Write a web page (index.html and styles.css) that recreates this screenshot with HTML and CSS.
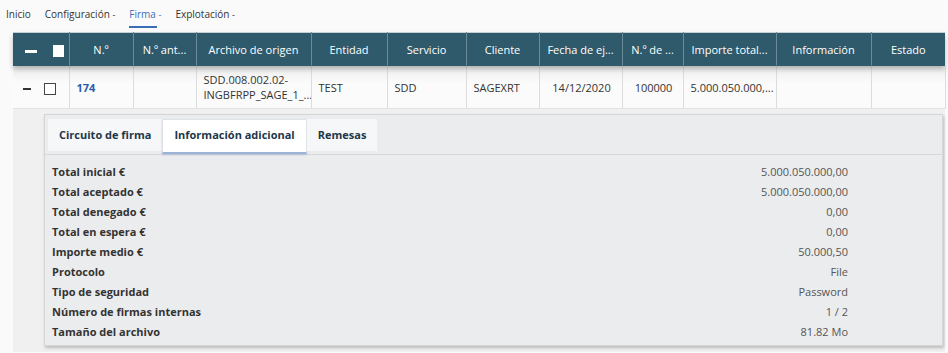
FILE: index.html
```html
<!DOCTYPE html>
<html lang="es">
<head>
  <meta charset="UTF-8">
  <title>Firma</title>
  <link rel="stylesheet" href="styles.css">
</head>
<body>
  <nav class="top-nav">
    <a class="nav-item">Inicio</a>
    <a class="nav-item">Configuración <span class="caret">-</span></a>
    <a class="nav-item active">Firma <span class="caret">-</span></a>
    <a class="nav-item">Explotación <span class="caret">-</span></a>
  </nav>

  <div class="grid-wrap">
    <table class="grid">
      <colgroup>
        <col style="width:56px"><col style="width:64px"><col style="width:63px"><col style="width:115px">
        <col style="width:76px"><col style="width:79px"><col style="width:73px"><col style="width:83px">
        <col style="width:61px"><col style="width:93px"><col style="width:95px"><col style="width:74px">
      </colgroup>
      <thead>
        <tr>
          <th class="ctrl-cell"><span class="dash light"></span><span class="box light"></span></th>
          <th>N.º</th>
          <th>N.º ant...</th>
          <th>Archivo de origen</th>
          <th>Entidad</th>
          <th>Servicio</th>
          <th>Cliente</th>
          <th>Fecha de ej...</th>
          <th>N.º de ...</th>
          <th>Importe total...</th>
          <th>Información</th>
          <th>Estado</th>
        </tr>
      </thead>
      <tbody>
        <tr class="data-row">
          <td class="ctrl-cell"><span class="dash"></span><span class="box"></span></td>
          <td class="num-link">174</td>
          <td></td>
          <td>SDD.008.002.02-<br>INGBFRPP_SAGE_1_...</td>
          <td>TEST</td>
          <td>SDD</td>
          <td>SAGEXRT</td>
          <td class="center">14/12/2020</td>
          <td class="center">100000</td>
          <td>5.000.050.000,...</td>
          <td></td>
          <td></td>
        </tr>
        <tr class="detail-row">
          <td colspan="12">
            <div class="detail-card">
              <div class="tabs">
                <div class="tab">Circuito de firma</div>
                <div class="tab selected">Información adicional</div>
                <div class="tab">Remesas</div>
              </div>
              <dl class="info-list">
                <dt>Total inicial €</dt><dd>5.000.050.000,00</dd>
                <dt>Total aceptado €</dt><dd>5.000.050.000,00</dd>
                <dt>Total denegado €</dt><dd>0,00</dd>
                <dt>Total en espera €</dt><dd>0,00</dd>
                <dt>Importe medio €</dt><dd>50.000,50</dd>
                <dt>Protocolo</dt><dd>File</dd>
                <dt>Tipo de seguridad</dt><dd>Password</dd>
                <dt>Número de firmas internas</dt><dd>1 / 2</dd>
                <dt>Tamaño del archivo</dt><dd>81.82 Mo</dd>
              </dl>
            </div>
          </td>
        </tr>
      </tbody>
    </table>
  </div>
</body>
</html>
```

FILE: styles.css
```css
body {
  margin: 0;
  background-color: #fafafa;
  font-family: "Open Sans", "Noto Sans", sans-serif;
  color: #333;
}
.top-nav {
  display: flex;
  gap: 14px;
  height: 32px;
  padding-left: 6px;
  font-size: 10px;
  line-height: 28px;
}
.nav-item {
  color: #333;
  cursor: pointer;
}
.nav-item .caret {
  font-size: 9px;
}
.nav-item.active {
  color: #3a6fb5;
  position: relative;
}
.nav-item.active::after {
  content: "";
  position: absolute;
  left: 0;
  right: 4px;
  bottom: 4px;
  height: 2px;
  background-color: #3a6fb5;
}
.grid-wrap {
  margin-left: 13px;
  width: 932px;
}
.grid {
  width: 932px;
  table-layout: fixed;
  border-collapse: collapse;
  font-size: 11px;
}
.grid thead tr {
  background-color: #2f5a6b;
  box-shadow: 0 3px 5px rgba(0, 0, 0, 0.25);
  position: relative;
}
.grid th {
  height: 33px;
  padding: 0 5px;
  color: #fff;
  font-weight: normal;
  text-align: center;
  white-space: nowrap;
  overflow: hidden;
  border-right: 1px solid #6a8c99;
  border-top: 1px solid #c9d3d7;
}
.grid th:last-child {
  border-right: none;
}
.data-row td {
  height: 42px;
  padding: 0 5px 0 7px;
  border-right: 1px solid #dcdcdc;
  border-bottom: 1px solid #e2e2e2;
  background: linear-gradient(#ececec, #fbfbfb 40%, #fbfbfb);
  line-height: 15px;
  white-space: nowrap;
  overflow: hidden;
}
.data-row td.center {
  text-align: center;
}
.data-row td.num-link {
  color: #2a5db0;
  font-weight: bold;
}
.ctrl-cell {
  padding: 0 !important;
}
.ctrl-cell .dash {
  display: inline-block;
  width: 8px;
  height: 2px;
  background-color: #333;
  margin-left: 10px;
  vertical-align: middle;
}
.ctrl-cell .box {
  display: inline-block;
  width: 10px;
  height: 10px;
  border: 1px solid #444;
  background-color: #fff;
  margin-left: 13px;
  vertical-align: middle;
}
.ctrl-cell .dash.light {
  width: 12px;
  height: 3px;
  background-color: #fff;
  margin-left: 7px;
}
.ctrl-cell .box.light {
  width: 11px;
  height: 12px;
  border: none;
  margin-left: 16px;
}
.detail-row td {
  background-color: #f0f0f1;
  padding: 5px 2px 6px 31px;
}
.detail-card {
  background-color: #ebecee;
  border: 1px solid #d6d6d6;
  box-shadow: 1px 2px 3px rgba(0, 0, 0, 0.22);
}
.tabs {
  display: flex;
  padding: 4px 0 0 3px;
  border-bottom: 1px solid #d7d8da;
}
.tab {
  height: 32px;
  line-height: 32px;
  padding: 0 11px;
  background-color: #f6f7f8;
  color: #22364a;
  font-weight: 700;
  font-size: 11px;
}
.tab.selected {
  background-color: #fff;
  border: 1px solid #dfe3e8;
  border-bottom: 2px solid #9bb3d6;
  line-height: 29px;
  box-shadow: 0 1px 2px rgba(60, 100, 170, 0.25);
}
.info-list {
  display: grid;
  grid-template-columns: 1fr auto;
  margin: 0;
  padding: 7px 94px 3px 7px;
  font-size: 11px;
  line-height: 20px;
}
.info-list dt {
  font-weight: 700;
  color: #333;
}
.info-list dd {
  margin: 0;
  text-align: right;
  color: #555;
}
```
